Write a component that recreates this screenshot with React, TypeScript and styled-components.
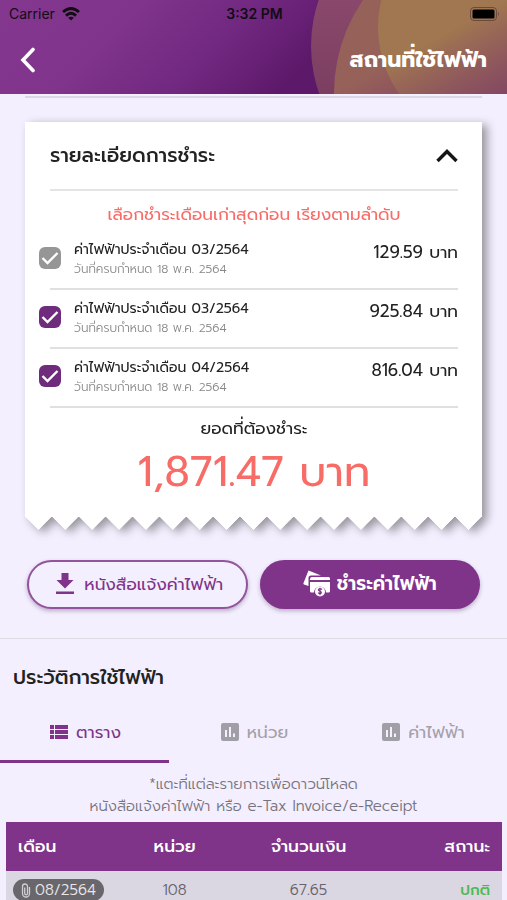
import React from "react";
import styled, { createGlobalStyle } from "styled-components";

const purple = "#7f348a";
const coral = "#f86c68";
const lilac = "#f3effe";
const thai = `Prompt, "Noto Sans Thai", "Noto Sans", "Open Sans", sans-serif`;

const GlobalStyle = createGlobalStyle`
  * { box-sizing: border-box; }
  body { margin: 0; background: ${lilac}; color: #222; font-family: ${thai}; }
  button, input { font-family: inherit; }
  h1, h2, p { margin: 0; font-weight: 400; }
`;

const Screen = styled.div`
  height: 100vh;
  display: flex;
  flex-direction: column;
  overflow: hidden;
`;

const Header = styled.header`
  position: relative;
  flex: none;
  background: linear-gradient(135deg, #83378e 0%, #80348b 24%, #712880 44%, #5c1869 62%);
`;

const HeaderArt = styled.svg`
  position: absolute;
  top: 0;
  right: 0;
  width: 200px;
  height: 100%;
`;

const StatusBar = styled.div`
  position: relative;
  display: grid;
  grid-template-columns: 1fr auto 1fr;
  align-items: center;
  height: 27px;
  padding: 0 7px 0 9px;
  color: #120c14;
  font: 14px/18px Inter, sans-serif;
`;

const Carrier = styled.span`
  display: flex;
  align-items: center;
  gap: 7px;
`;

const Clock = styled.span`
  font-size: 14px;
  font-weight: 600;
`;

const Battery = styled.svg`
  justify-self: end;
`;

const NavBar = styled.div`
  position: relative;
  display: flex;
  align-items: center;
  justify-content: space-between;
  height: 67px;
  padding: 0 20px 2px 12px;
`;

const BackButton = styled.button`
  display: flex;
  padding: 4px;
  border: 0;
  background: none;
  cursor: pointer;
`;

const PageTitle = styled.h1`
  color: #fff;
  font-size: 22px;
  line-height: 28px;
  font-weight: 700;
`;

const Main = styled.main`
  flex: 1;
  min-height: 0;
  overflow-y: auto;
  scrollbar-width: none;
`;

const TopRule = styled.div`
  height: 2px;
  margin: 2px 25px 24px;
  background: #dcd7e4;
`;

const Receipt = styled.section`
  margin: 0 25px;
  filter: drop-shadow(5px 3px 5px rgba(0, 0, 0, 0.38));
`;

const ReceiptBody = styled.div`
  padding: 0 24px 0 14px;
  background: #fff;
`;

const TornEdge = styled.div`
  height: 14px;
  background: conic-gradient(from -45deg at 50% 100%, #fff 90deg, transparent 0) 0 0 / calc(100% / 17) 14px;
`;

const ReceiptHead = styled.div`
  display: flex;
  align-items: center;
  justify-content: space-between;
  height: 69px;
  margin-left: 11px;
  border-bottom: 2px solid #e4e4e6;
`;

const ReceiptTitle = styled.h2`
  padding-bottom: 2px;
  font-size: 20px;
  line-height: 28px;
  font-weight: 500;
`;

const CollapseButton = styled.button`
  display: flex;
  padding: 0;
  border: 0;
  background: none;
  cursor: pointer;
`;

const Notice = styled.p`
  height: 40px;
  margin-left: 11px;
  padding-top: 9px;
  color: ${coral};
  font-size: 17px;
  line-height: 28px;
  text-align: center;
`;

const BillRow = styled.div`
  display: grid;
  grid-template-columns: 22px 1fr auto;
  column-gap: 13px;
  height: 59px;
`;

const Tick = styled.input`
  appearance: none;
  width: 22px;
  height: 22px;
  margin: 16px 0 0;
  border-radius: 6px;
  background: #ccc;
  cursor: pointer;

  &:checked {
    background: #6f2b7c
      url("data:image/svg+xml,%3Csvg xmlns='http://www.w3.org/2000/svg' viewBox='0 0 22 22'%3E%3Cpath d='M3.500 11l5 5L18.500 6' fill='none' stroke='white' stroke-width='2.400'/%3E%3C/svg%3E");
  }
  &:disabled {
    background-color: #969696;
  }
`;

const BillLabel = styled.label`
  display: block;
  padding-top: 10px;
`;

const BillName = styled.span`
  display: block;
  font-size: 14px;
  line-height: 18px;
`;

const BillDue = styled.span`
  display: block;
  color: #888;
  font-size: 12px;
  font-weight: 300;
  line-height: 20px;
`;

const BillAmount = styled.span`
  padding-top: 8px;
  font-size: 17px;
  line-height: 26px;
`;

const BillRule = styled.div`
  grid-column: 1 / -1;
  align-self: end;
  height: 2px;
  margin-left: 11px;
  background: #e0e0e2;
`;

const Total = styled.div`
  height: 108px;
  margin-left: 11px;
  padding-top: 6px;
  text-align: center;
`;

const TotalLabel = styled.p`
  font-size: 17px;
  line-height: 28px;
`;

const TotalAmount = styled.p`
  color: ${coral};
  font-size: 42px;
  line-height: 60px;
`;

const Actions = styled.div`
  display: grid;
  grid-template-columns: 1fr 1fr;
  gap: 12px;
  padding: 30px 27px 29px;
  border-bottom: 1px solid #dedbe0;
`;

const ActionButton = styled.button<{ $filled?: boolean }>`
  display: flex;
  align-items: center;
  justify-content: center;
  gap: ${(p) => (p.$filled ? 6 : 10)}px;
  height: 49px;
  padding: 0 0 2px ${(p) => (p.$filled ? 0 : 5)}px;
  border: ${(p) => (p.$filled ? 0 : "2px solid #93549c")};
  border-radius: 25px;
  background: ${(p) => (p.$filled ? purple : lilac)};
  color: ${(p) => (p.$filled ? "#fff" : purple)};
  box-shadow: 0 2px 4px rgba(60, 20, 80, 0.3);
  font-size: ${(p) => (p.$filled ? 19 : 17)}px;
  font-weight: ${(p) => (p.$filled ? 600 : 400)};
  white-space: nowrap;
  cursor: pointer;
`;

const SectionTitle = styled.h2`
  padding: 24px 13px 12px;
  font-size: 20px;
  line-height: 28px;
  font-weight: 500;
`;

const Tabs = styled.div`
  display: grid;
  grid-template-columns: repeat(3, 1fr);
`;

const Tab = styled.button<{ $active?: boolean }>`
  display: flex;
  align-items: center;
  justify-content: center;
  gap: 8px;
  height: 60px;
  padding: 0 0 0 2px;
  border: 0;
  border-bottom: 3px solid ${(p) => (p.$active ? purple : "transparent")};
  background: none;
  color: ${(p) => (p.$active ? purple : "#a3a0a9")};
  font-size: 17px;
  cursor: pointer;
`;

const Hint = styled.p`
  padding: 10px 0 5px;
  color: #77737e;
  font-size: 15px;
  font-weight: 300;
  line-height: 22px;
  text-align: center;
`;

const TableWrap = styled.div`
  padding: 0 5px 0 6px;
`;

const Table = styled.table`
  width: 100%;
  table-layout: fixed;
  border-collapse: collapse;
`;

const HeadCell = styled.th`
  height: 49px;
  padding: 0 12px 2px;
  background: ${purple};
  color: #fff;
  font-size: 17px;
  font-weight: 500;
  text-align: center;

  &:first-child { width: 23%; text-align: left; }
  &:nth-child(2) { width: 22%; }
  &:last-child { width: 23%; text-align: right; }
`;

const Cell = styled.td`
  height: 38px;
  padding: 0 12px;
  background: #dad6e2;
  color: #66636c;
  font-size: 15px;
  font-weight: 300;
  line-height: 18px;
  text-align: center;

  &:first-child { padding: 0 7px; text-align: left; }
  &:last-child { color: #4cb950; font-weight: 500; text-align: right; }
`;

const MonthButton = styled.button`
  display: inline-flex;
  align-items: center;
  gap: 4px;
  height: 22px;
  padding: 0 8px;
  border: 0;
  border-radius: 11px;
  background: #69676b;
  color: #e9e7ec;
  font-size: 15px;
  font-weight: 300;
  line-height: 18px;
  vertical-align: middle;
  cursor: pointer;
`;

const ChartIcon = () => (
  <svg width="18" height="18" viewBox="0 0 18 18" aria-hidden="true">
    <rect width="18" height="18" rx="2" fill="#a19fa6" />
    <path d="M4 7h2v7H4zM8 4h2v10H8zM12 10.500h2V14h-2z" fill="#f3effe" />
  </svg>
);

const bills = [
  { id: "bill-1", name: "ค่าไฟฟ้าประจำเดือน 03/2564", due: "วันที่ครบกำหนด 18 พ.ค. 2564", amount: "129.59 บาท", locked: true },
  { id: "bill-2", name: "ค่าไฟฟ้าประจำเดือน 03/2564", due: "วันที่ครบกำหนด 18 พ.ค. 2564", amount: "925.84 บาท", locked: false },
  { id: "bill-3", name: "ค่าไฟฟ้าประจำเดือน 04/2564", due: "วันที่ครบกำหนด 18 พ.ค. 2564", amount: "816.04 บาท", locked: false },
];

export default function App() {
  return (
    <Screen>
      <GlobalStyle />
      <Header>
        <HeaderArt viewBox="307 0 200 94" preserveAspectRatio="none" aria-hidden="true">
          <defs>
            <linearGradient id="glow" x1="0" y1="0" x2="1" y2="1">
              <stop offset="0.5" stopColor="#7b2c70" stopOpacity="0" />
              <stop offset="1" stopColor="#7b3c66" stopOpacity="0.8" />
            </linearGradient>
            <linearGradient id="ring" x1="0" y1="0" x2="0" y2="1">
              <stop offset="0.250" stopColor="#8d4b6e" />
              <stop offset="0.750" stopColor="#783c5e" />
            </linearGradient>
          </defs>
          <circle cx="453" cy="46" r="142" fill="url(#ring)" />
          <circle cx="498" cy="93" r="164" fill="#966159" />
          <circle cx="494" cy="27" r="116" fill="#a07750" />
          <rect x="334" width="173" height="94" fill="url(#glow)" />
        </HeaderArt>
        <StatusBar>
          <Carrier>
            Carrier
            <svg width="18" height="14" viewBox="0 0 18 14" fill="none" stroke="#120c14" strokeWidth="2.8" aria-hidden="true">
              <path d="M1 5Q9-2 17 5M4 8.600Q9 4 14 8.600" />
              <path d="M9 13.500L6.200 10.700Q9 8.600 11.800 10.700z" fill="#120c14" stroke="none" />
            </svg>
          </Carrier>
          <Clock>3:32 PM</Clock>
          <Battery width="30" height="14" viewBox="0 0 30 14" aria-hidden="true">
            <rect x="0.500" y="0.500" width="26" height="13" rx="3.500" fill="none" stroke="#6b4a3c" />
            <rect x="2.500" y="2.500" width="22" height="9" rx="1.500" fill="#000" />
            <path d="M28 5q2 2 0 4z" fill="#6b4a3c" />
          </Battery>
        </StatusBar>
        <NavBar>
          <BackButton aria-label="ย้อนกลับ">
            <svg width="24" height="26" viewBox="0 0 24 26" fill="none" stroke="#fff" strokeWidth="3.600" aria-hidden="true">
              <path d="M17 2.500L7 13l10 10.500" strokeLinecap="round" />
            </svg>
          </BackButton>
          <PageTitle>สถานที่ใช้ไฟฟ้า</PageTitle>
        </NavBar>
      </Header>

      <Main>
        <TopRule />
        <Receipt>
          <ReceiptBody>
            <ReceiptHead>
              <ReceiptTitle>รายละเอียดการชำระ</ReceiptTitle>
              <CollapseButton aria-label="ย่อรายละเอียด" aria-expanded="true">
                <svg width="22" height="16" viewBox="0 0 22 16" fill="none" stroke="#151515" strokeWidth="3.400" aria-hidden="true">
                  <path d="M1.500 13L11 3.500l9.500 9.500" />
                </svg>
              </CollapseButton>
            </ReceiptHead>
            <Notice>เลือกชำระเดือนเก่าสุดก่อน เรียงตามลำดับ</Notice>
            {bills.map((bill) => (
              <BillRow key={bill.id}>
                <Tick type="checkbox" id={bill.id} defaultChecked disabled={bill.locked} />
                <BillLabel htmlFor={bill.id}>
                  <BillName>{bill.name}</BillName>
                  <BillDue>{bill.due}</BillDue>
                </BillLabel>
                <BillAmount>{bill.amount}</BillAmount>
                <BillRule />
              </BillRow>
            ))}
            <Total>
              <TotalLabel>ยอดที่ต้องชำระ</TotalLabel>
              <TotalAmount>1,871.47 บาท</TotalAmount>
            </Total>
          </ReceiptBody>
          <TornEdge />
        </Receipt>

        <Actions>
          <ActionButton>
            <svg width="18" height="21" viewBox="0 0 18 21" fill={purple} aria-hidden="true">
              <path d="M5.500 0h7v7h5L9 15.500.500 7h5zM0 18.500h18V21H0z" />
            </svg>
            หนังสือแจ้งค่าไฟฟ้า
          </ActionButton>
          <ActionButton $filled>
            <svg width="28" height="27" viewBox="0 0 28 27" aria-hidden="true">
              <path d="M5.500 0.500L18 5.500H8Q5.500 5.500 5.500 8v8L1 14.500Q0 14 0.500 13z" fill="#fff" />
              <path d="M9 7h16.500Q27 7 27 8.500V10H7V9q0-2 2-2zM7 12h20v9q0 1.500-1.500 1.500H23a6 6 0 1 0-12 0H8.500Q7 22.500 7 21z" fill="#fff" />
              <circle cx="17" cy="21.500" r="5" fill="#fff" />
              <path d="M19 19.500q-2-1.500-3.300-.4c-1.600 2 3.500 1.800 2.600 3.900q-1.300 1.200-3.300-.3M17 17.800v7.400" fill="none" stroke={purple} strokeWidth="1.200" />
            </svg>
            ชำระค่าไฟฟ้า
          </ActionButton>
        </Actions>

        <SectionTitle>ประวัติการใช้ไฟฟ้า</SectionTitle>
        <Tabs role="tablist">
          <Tab role="tab" aria-selected="true" $active>
            <svg width="18" height="14" viewBox="0 0 18 14" fill={purple} aria-hidden="true">
              <path d="M0 0h4v4H0zM5 0h13v4H5zM0 5h4v4H0zM5 5h13v4H5zM0 10h4v4H0zM5 10h13v4H5z" />
            </svg>
            ตาราง
          </Tab>
          <Tab role="tab" aria-selected="false"><ChartIcon />หน่วย</Tab>
          <Tab role="tab" aria-selected="false"><ChartIcon />ค่าไฟฟ้า</Tab>
        </Tabs>
        <Hint>
          *แตะที่แต่ละรายการเพื่อดาวน์โหลด
          <br />
          หนังสือแจ้งค่าไฟฟ้า หรือ e-Tax Invoice/e-Receipt
        </Hint>
        <TableWrap>
          <Table>
            <thead>
              <tr>
                <HeadCell scope="col">เดือน</HeadCell>
                <HeadCell scope="col">หน่วย</HeadCell>
                <HeadCell scope="col">จำนวนเงิน</HeadCell>
                <HeadCell scope="col">สถานะ</HeadCell>
              </tr>
            </thead>
            <tbody>
              <tr>
                <Cell>
                  <MonthButton>
                    <svg width="10" height="15" viewBox="0 0 10 15" fill="none" stroke="#d0ced3" strokeWidth="1.300" aria-hidden="true">
                      <path d="M8.500 4v6.500a3.500 3.500 0 0 1-7 0V3.500a2.500 2.500 0 0 1 5 0v7a1.400 1.400 0 0 1-2.800 0V4.500" />
                    </svg>
                    08/2564
                  </MonthButton>
                </Cell>
                <Cell>108</Cell>
                <Cell>67.65</Cell>
                <Cell>ปกติ</Cell>
              </tr>
            </tbody>
          </Table>
        </TableWrap>
      </Main>
    </Screen>
  );
}
